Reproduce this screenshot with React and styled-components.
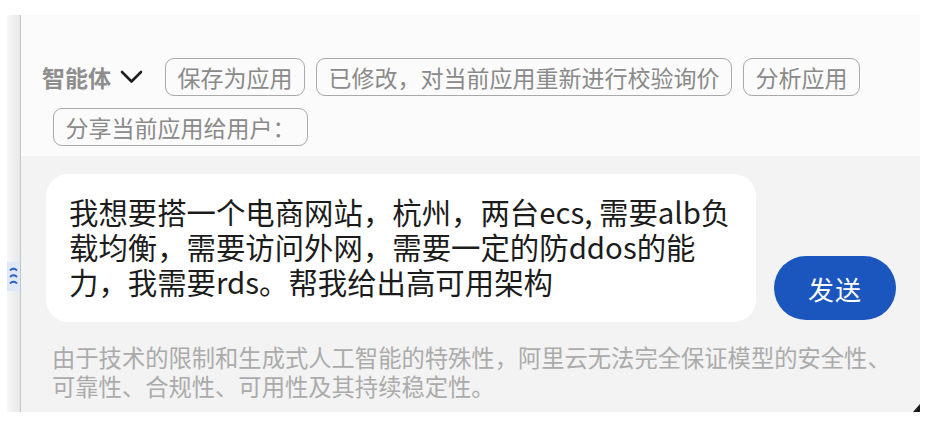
import React from 'react'
import styled, { createGlobalStyle } from 'styled-components'

const GlobalStyle = createGlobalStyle`
  html, body {
    margin: 0;
    padding: 0;
    background: #ffffff;
  }
  body {
    font-family: "Noto Sans CJK SC", "Noto Sans", sans-serif;
  }
`

const Page = styled.div`
  display: flex;
  width: 930px;
  height: 428px;
  padding: 15px 10px 16px 7px;
  box-sizing: border-box;
`

const SideStrip = styled.div`
  width: 14px;
  display: flex;
  flex-direction: column;
  padding-top: 247px;
  box-sizing: border-box;
  background: linear-gradient(to right, #f6f7f8, #e6e8eb);
  border-right: 1.5px solid #c4c5c7;
`

const SideTab = styled.div`
  height: 29px;
  display: flex;
  align-items: center;
  justify-content: center;
  background: #dfe8f6;
`

const Panel = styled.div`
  flex: 1;
  display: flex;
  flex-direction: column;
  min-width: 0;
`

const TopBar = styled.div`
  background: #fbfbfb;
  padding: 43px 20px 10px 21px;
  display: flex;
  flex-wrap: wrap;
  align-items: center;
  row-gap: 12px;
`

const AgentLabel = styled.span`
  font-size: 23px;
  font-weight: 700;
  color: #8e8e8e;
  line-height: 38px;
`

const Chevron = styled.svg`
  margin-left: 9px;
  margin-right: 11px;
`

const Tag = styled.span`
  height: 38px;
  box-sizing: border-box;
  margin-left: 11px;
  padding: 0 11.5px;
  display: inline-flex;
  align-items: center;
  border: 1.5px solid #a9a9a9;
  border-radius: 9px;
  font-size: 23px;
  color: #8a8a8a;
  white-space: nowrap;
`

const Bottom = styled.div`
  position: relative;
  flex: 1;
  background: #f3f3f3;
  padding: 18px 0 0 25px;
  display: flex;
  flex-direction: column;
`

const InputRow = styled.div`
  display: flex;
  align-items: flex-end;
  gap: 18px;
`

const InputBox = styled.div`
  width: 710px;
  height: 148px;
  box-sizing: border-box;
  background: #ffffff;
  border-radius: 22px;
  padding: 20px 20px 0 23px;
  font-size: 29.4px;
  line-height: 35px;
  color: #1c1c1c;
`

const SendButton = styled.button`
  width: 122px;
  height: 64px;
  margin-bottom: 2px;
  border: none;
  border-radius: 32px;
  background: #1b56be;
  color: #ffffff;
  font-family: inherit;
  font-size: 26px;
  letter-spacing: 1px;
`

const Disclaimer = styled.p`
  margin: 21px 20px 0 6px;
  font-size: 23.3px;
  line-height: 29px;
  color: #ababab;
  white-space: nowrap;
`

const Grip = styled.svg`
  position: absolute;
  right: 0;
  bottom: 0;
`

export default function App() {
  const tags = ['保存为应用', '已修改，对当前应用重新进行校验询价', '分析应用', '分享当前应用给用户：']
  return (
    <>
      <GlobalStyle />
      <Page>
        <SideStrip>
          <SideTab>
            <svg width="9" height="20" viewBox="0 0 9 20">
              <path d="M1.5 3 Q4.5 0.5 7.5 3 M1.5 9.5 Q4.5 7 7.5 9.5 M1.5 16 Q4.5 13.5 7.5 16" fill="none" stroke="#2a62c6" strokeWidth="1.8" strokeLinecap="round" />
            </svg>
          </SideTab>
        </SideStrip>
        <Panel>
          <TopBar>
            <AgentLabel>智能体</AgentLabel>
            <Chevron width="23" height="14" viewBox="0 0 23 14">
              <polyline points="2,2 11.5,11.5 21,2" fill="none" stroke="#1e1e1e" strokeWidth="2.6" strokeLinecap="round" strokeLinejoin="round" />
            </Chevron>
            {tags.map(t => (
              <Tag key={t}>{t}</Tag>
            ))}
          </TopBar>
          <Bottom>
            <InputRow>
              <InputBox>
                我想要搭一个电商网站，杭州，两台ecs, 需要alb负<br />
                载均衡，需要访问外网，需要一定的防ddos的能<br />
                力，我需要rds。帮我给出高可用架构
              </InputBox>
              <SendButton>发送</SendButton>
            </InputRow>
            <Disclaimer>
              由于技术的限制和生成式人工智能的特殊性，阿里云无法完全保证模型的安全性、<br />
              可靠性、合规性、可用性及其持续稳定性。
            </Disclaimer>
            <Grip width="7" height="8" viewBox="0 0 7 8">
              <polygon points="7,0 7,8 0,8" fill="#1a1a1a" />
            </Grip>
          </Bottom>
        </Panel>
      </Page>
    </>
  )
}
